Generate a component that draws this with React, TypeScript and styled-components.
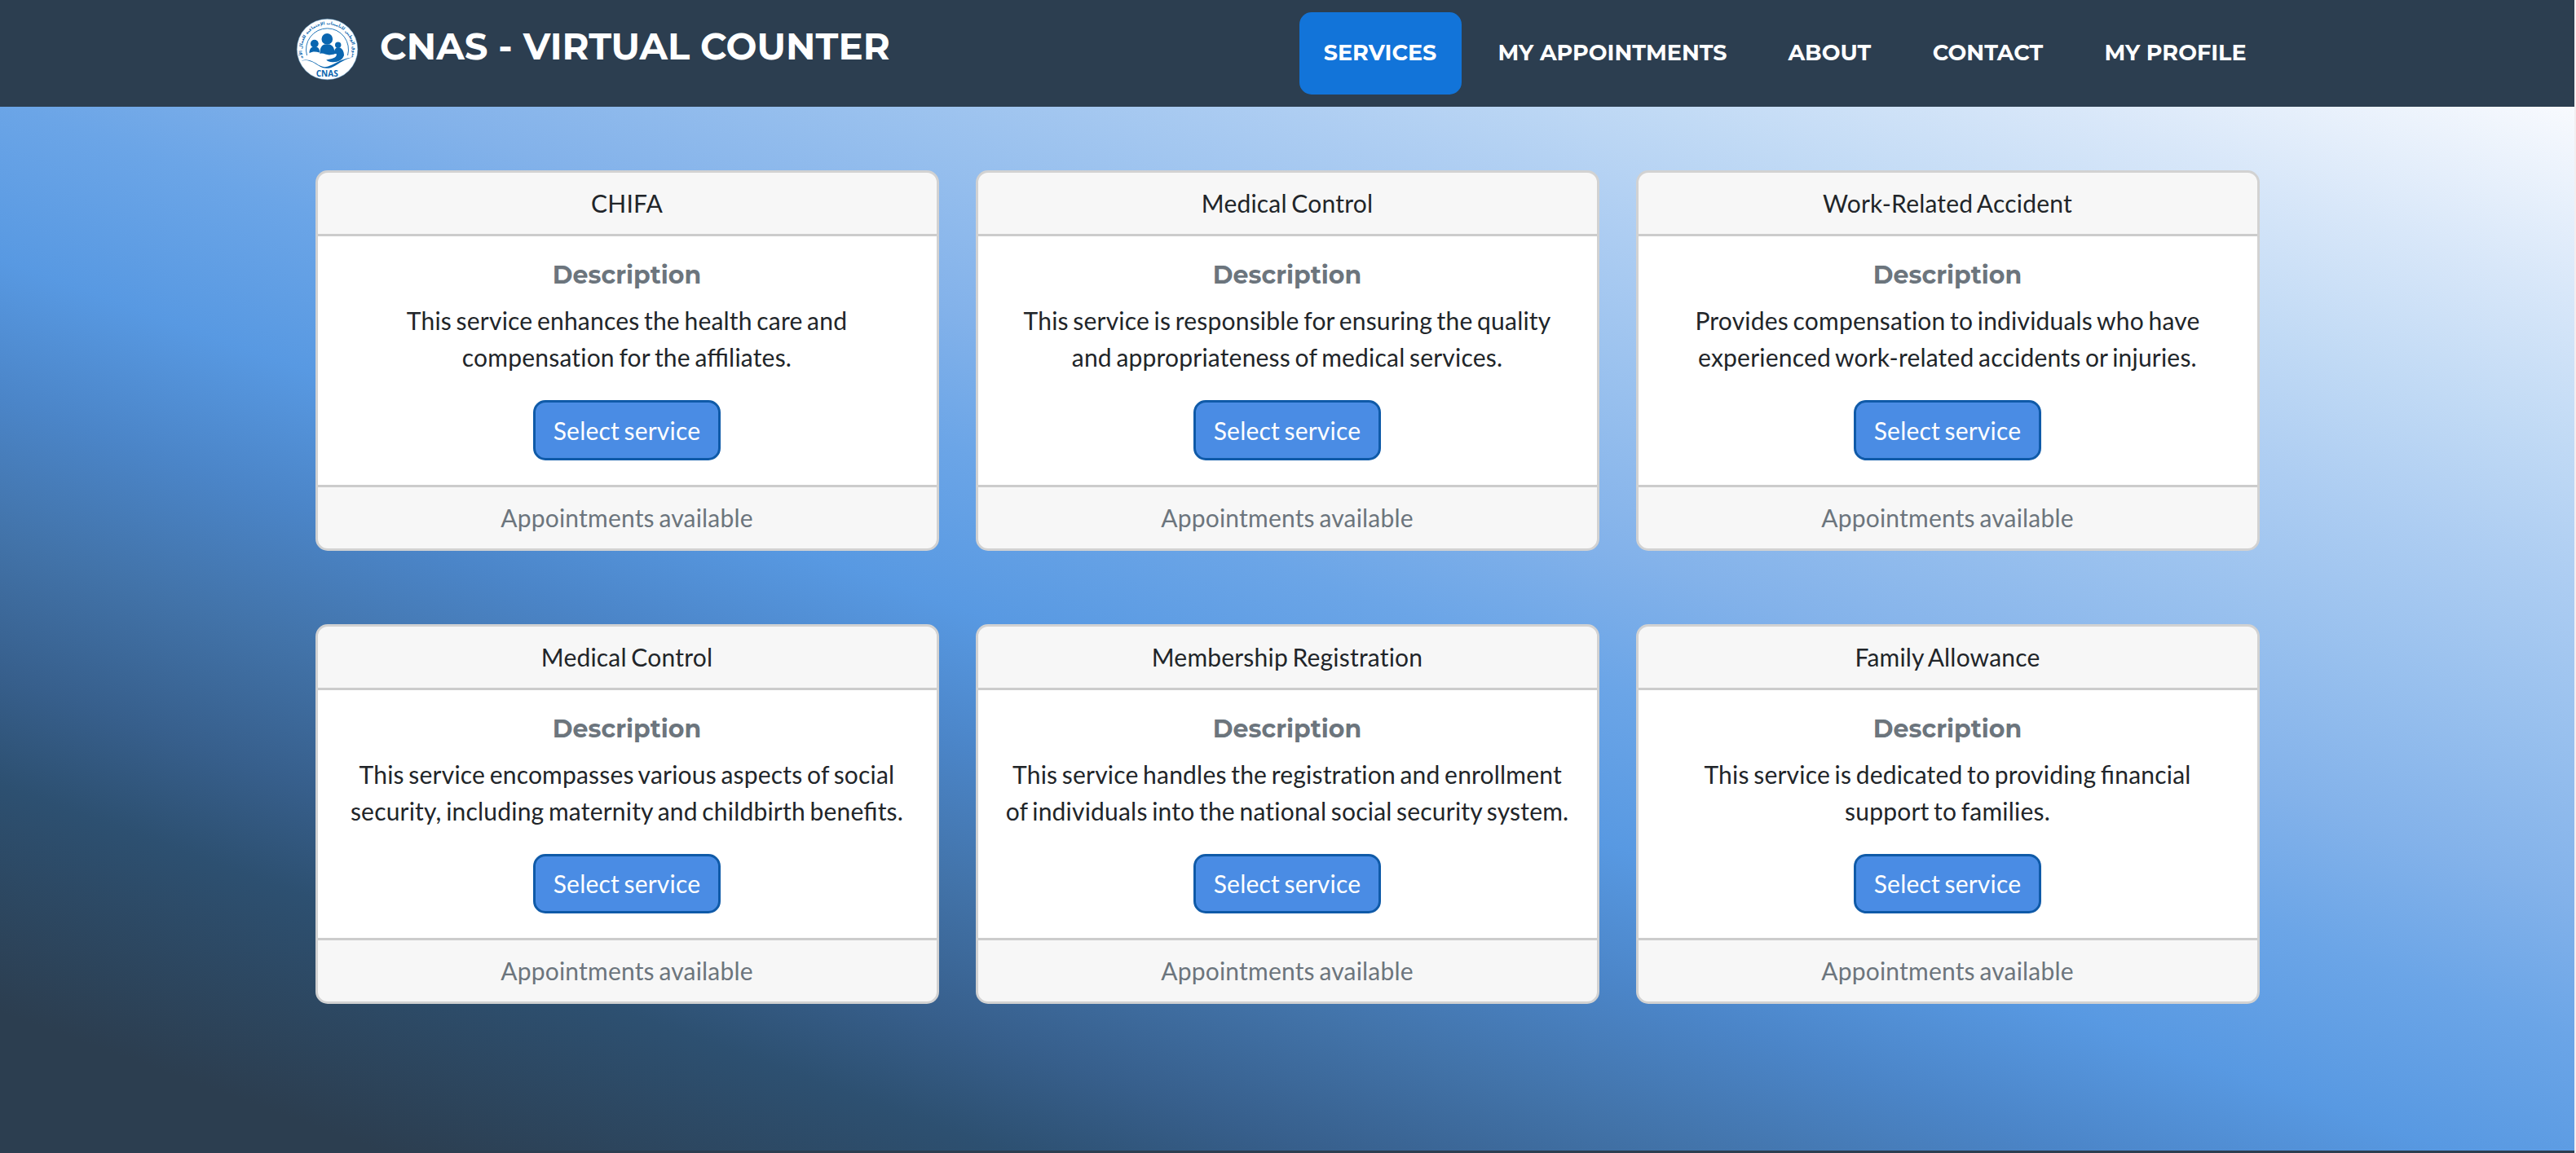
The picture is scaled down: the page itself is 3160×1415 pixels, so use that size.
import React from "react";
import styled, { createGlobalStyle } from "styled-components";

const GlobalStyle = createGlobalStyle`
  *, *::before, *::after { box-sizing: border-box; }
  body {
    margin: 0;
    background: #f3eef1;
    color: #212529;
    font-family: Lato, "Liberation Sans", sans-serif;
    font-size: 30px;
    line-height: 45px;
  }
`;

const heading = `Montserrat, Inter, "Liberation Sans", sans-serif`;

const Page = styled.div`
  display: flex;
  flex-direction: column;
  width: calc(100% - 2px);
  height: 1415px;
  overflow: hidden;
`;

const Header = styled.header`
  flex: none;
  height: 131px;
  background: #2c3e50;
`;

const HeaderInner = styled.div`
  display: flex;
  align-items: center;
  justify-content: space-between;
  width: 2430px;
  height: 100%;
  margin: 0 auto;
`;

const Brand = styled.a`
  display: flex;
  align-items: center;
  gap: 27px;
  margin-top: -10px;
  color: #fff;
  text-decoration: none;
`;

const BrandName = styled.span`
  font: 700 45px/56px ${heading};
  letter-spacing: 0.1px;
  white-space: nowrap;
  margin-top: -8px;
`;

const Nav = styled.nav`
  display: flex;
  gap: 15px;
  margin-right: 9px;
`;

const NavLink = styled.a<{ $active?: boolean; $width: number }>`
  display: flex;
  align-items: center;
  justify-content: center;
  width: ${(p) => p.$width}px;
  height: 101px;
  padding-bottom: 2px;
  border-radius: 15px;
  background: ${(p) => (p.$active ? "#1274d9" : "transparent")};
  color: #fff;
  font: 700 27px/40px ${heading};
  white-space: nowrap;
  text-decoration: none;
`;

const Services = styled.main`
  flex: 1;
  padding-top: 78.25px;
  background: linear-gradient(
    20deg,
    #2c3e50 0%,
    #2c3e50 7%,
    #2d5071 18.5%,
    #375f8c 24%,
    #4273a9 31%,
    #4b85c8 38%,
    #5899e2 45%,
    #6ba5e7 53%,
    #83b2ea 60%,
    #98c0ee 68%,
    #adcdf2 76%,
    #c1daf5 83%,
    #d8e7f9 90.5%,
    #f8fafe 100%
  );
`;

const CardGrid = styled.div`
  display: grid;
  grid-template-columns: repeat(3, 765px);
  gap: 90px 45px;
  justify-content: center;
`;

const Card = styled.article`
  display: flex;
  flex-direction: column;
  height: 466.5px;
  border: 3px solid rgba(0, 0, 0, 0.175);
  border-radius: 15px;
  background: #fff;
  text-align: center;
  letter-spacing: 0.2px;
  word-spacing: -2.3px;
`;

const CardHeader = styled.div`
  height: 78px;
  padding: 15px 30px;
  border-bottom: 3px solid rgba(0, 0, 0, 0.175);
  border-radius: 12px 12px 0 0;
  background: rgba(0, 0, 0, 0.03);
`;

const CardBody = styled.div`
  flex: 1;
  display: flex;
  flex-direction: column;
  align-items: center;
  padding-top: 30px;
`;

const CardTitle = styled.h5`
  margin: 0 0 15px;
  color: #6c757d;
  font: 700 30px/36px ${heading};
  letter-spacing: 0;
`;

const CardText = styled.p`
  margin: 0 0 30px;
`;

const Line = styled.span`
  display: block;
  white-space: nowrap;
`;

const Ligated = styled.span`
  font-feature-settings: "liga" 1;
`;

const SelectButton = styled.button`
  padding: 11.25px 22px;
  border: 3px solid #0f5aa8;
  border-radius: 15px;
  background: #4a8ce4;
  color: #fff;
  font: inherit;
  letter-spacing: inherit;
  word-spacing: inherit;
`;

const CardFooter = styled.div`
  height: 78px;
  padding: 15px 30px;
  border-top: 3px solid rgba(0, 0, 0, 0.175);
  border-radius: 0 0 12px 12px;
  background: rgba(0, 0, 0, 0.03);
  color: #6c757d;
`;

const FooterEdge = styled.footer`
  flex: none;
  height: 3px;
  background: #2c3e50;
`;

const LogoSvg = styled.svg`
  display: block;
  flex: none;
  width: 75px;
  height: 75px;
  overflow: visible;
`;

const blue = "#0a66b0";

function Logo() {
  return (
    <LogoSvg viewBox="0 0 75 75">
      <defs>
        <path id="ring" d="M8.5 49 A 31 31 0 1 1 66.5 49" />
      </defs>
      <circle cx="37.5" cy="37.5" r="37.3" fill="#fff" stroke="#5b9ccc" strokeWidth="0.5" />
      <text
        fill={blue}
        fontFamily='"DejaVu Sans", sans-serif'
        fontSize="5.2"
        fontWeight="700"
        textAnchor="middle"
        direction="rtl"
      >
        <textPath href="#ring" startOffset="50%">
          الصندوق الوطني للتأمينات الإجتماعية للعمال الأجراء
        </textPath>
      </text>
      <path d="M12.5 45 A 26 26 0 1 1 62.5 45" fill="none" stroke={blue} strokeWidth="0.9" />
      <g fill={blue}>
        <circle cx="37.3" cy="24.9" r="6.8" />
        <circle cx="21.8" cy="30.6" r="4.9" />
        <circle cx="50.7" cy="32.2" r="3.7" />
        <path d="M28.4 43 C28.4 35 31 32.5 34 31.5 H40.6 C44.5 33 46.6 36 46.4 43.5 L40 44.5 C35 44.5 33 41.5 28.4 43 Z" />
        <path d="M15.5 42.2 C15.4 37.5 17.5 35.4 19.5 34.5 H24.3 C27 35.5 28.4 38 28 41.5 C23 40.2 19 40.2 15.5 42.2 Z" />
        <path d="M45.8 43 C45.8 38.8 46.8 36.6 49 35.6 H52.8 C56 36.7 58 40.3 58 45 C56 50.6 51 53.2 45 53.2 C41 53.4 38.5 52.8 36.2 50.6 L43 48.9 C47 48 49.3 46.2 48.7 43 Z" />
      </g>
      <path
        d="M5.5 51.5 C16 48 21 53.5 29 57.8 C40 63.5 48 49.5 69.5 47.2 C55 50 50 57.5 41.5 60.2 C31 63 25.5 56 19 53 C14 50.8 10 50.5 5.5 51.5 Z"
        fill={blue}
      />
      <text
        x="37.2"
        y="71.3"
        fill={blue}
        fontFamily='"Open Sans", "Liberation Sans", sans-serif'
        fontSize="11.2"
        fontWeight="700"
        textAnchor="middle"
        textLength="27"
        lengthAdjust="spacingAndGlyphs"
      >
        CNAS
      </text>
    </LogoSvg>
  );
}

const links = [
  { label: "SERVICES", width: 199, active: true },
  { label: "MY APPOINTMENTS", width: 341 },
  { label: "ABOUT", width: 161.5 },
  { label: "CONTACT", width: 197 },
  { label: "MY PROFILE", width: 233 },
];

const services = [
  {
    name: "CHIFA",
    lines: ["This service enhances the health care and", "compensation for the affiliates."],
  },
  {
    name: "Medical Control",
    lines: [
      "This service is responsible for ensuring the quality",
      "and appropriateness of medical services.",
    ],
  },
  {
    name: "Work-Related Accident",
    lines: [
      "Provides compensation to individuals who have",
      "experienced work-related accidents or injuries.",
    ],
  },
  {
    name: "Medical Control",
    lines: [
      "This service encompasses various aspects of social",
      "security, including maternity and childbirth benefits.",
    ],
  },
  {
    name: "Membership Registration",
    lines: [
      "This service handles the registration and enrollment",
      "of individuals into the national social security system.",
    ],
  },
  {
    name: "Family Allowance",
    lines: ["This service is dedicated to providing financial", "support to families."],
  },
];

// Letter-spacing switches ligatures off; words with "fi" or "ffi" get theirs back.
function withLigatures(line: string) {
  return line
    .split(/(\S*fi\S*)/)
    .map((part, i) => (i % 2 ? <Ligated key={i}>{part}</Ligated> : part));
}

export default function App() {
  return (
    <>
      <GlobalStyle />
      <Page>
        <Header>
          <HeaderInner>
            <Brand>
              <Logo />
              <BrandName>CNAS - VIRTUAL COUNTER</BrandName>
            </Brand>
            <Nav>
              {links.map((l) => (
                <NavLink key={l.label} $active={l.active} $width={l.width}>
                  {l.label}
                </NavLink>
              ))}
            </Nav>
          </HeaderInner>
        </Header>
        <Services>
          <CardGrid>
            {services.map((s, i) => (
              <Card key={i}>
                <CardHeader>{s.name}</CardHeader>
                <CardBody>
                  <CardTitle>Description</CardTitle>
                  <CardText>
                    {s.lines.map((line) => (
                      <Line key={line}>{withLigatures(line)}</Line>
                    ))}
                  </CardText>
                  <SelectButton>Select service</SelectButton>
                </CardBody>
                <CardFooter>Appointments available</CardFooter>
              </Card>
            ))}
          </CardGrid>
        </Services>
        <FooterEdge />
      </Page>
    </>
  );
}
